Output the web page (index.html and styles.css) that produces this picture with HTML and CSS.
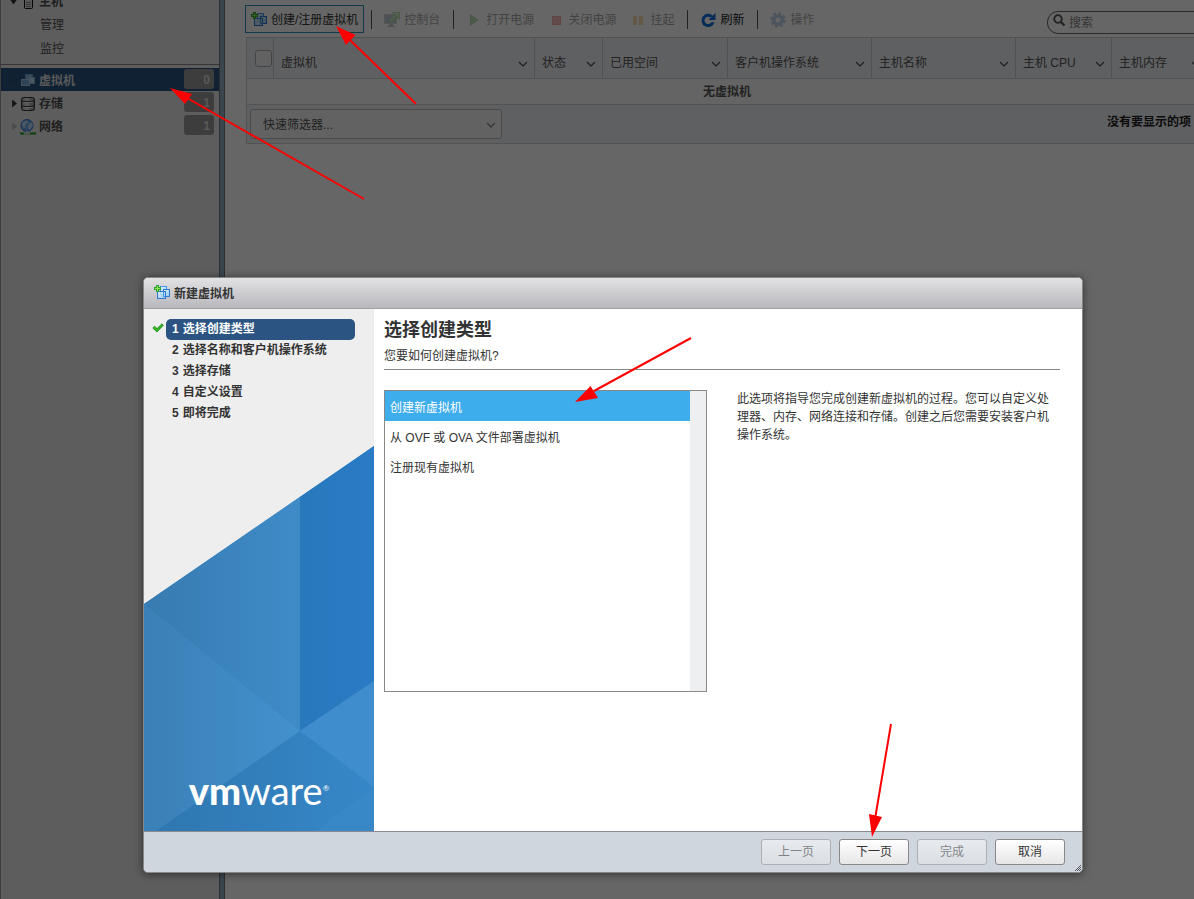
FILE: index.html
```html
<!DOCTYPE html>
<html lang="zh-CN">
<head>
<meta charset="utf-8">
<title>新建虚拟机</title>
<meta name="viewport" content="width=device-width, initial-scale=1">
<link rel="stylesheet" href="styles.css">
</head>
<body>
<svg class="defs" aria-hidden="true">
  <defs>
    <linearGradient id="sq" x1="0" y1="0" x2="1" y2="1"><stop offset="0" stop-color="#e4f4ff"/><stop offset="1" stop-color="#8cc8f5"/></linearGradient>
    <linearGradient id="cyl"><stop offset="0" stop-color="#888"/><stop offset=".4" stop-color="#e6e6e6"/><stop offset="1" stop-color="#777"/></linearGradient>
    <symbol id="i-newvm" viewBox="0 0 16 16">
      <rect x="6.500" y="1.500" width="6" height="8" fill="url(#sq)" stroke="#4a96e6"/>
      <rect x="9.500" y="4.500" width="6" height="7" fill="url(#sq)" stroke="#2f78d0"/>
      <rect x="3.500" y="6.500" width="8" height="7" fill="url(#sq)" fill-opacity=".8" stroke="#2f78d0"/>
      <path d="M9.500 6.500v5h2" fill="none" stroke="#4a96e6"/>
      <path d="M2 0h3v2h2v3H5v2H2V5H0V2h2z" fill="#2da32d"/>
      <path d="M3 1h1v2h2v1H4v2H3V4H1V3h2z" fill="#8bea5a"/>
    </symbol>
    <symbol id="i-vm" viewBox="0 0 16 16">
      <rect x="5.500" y="1.500" width="7" height="7" fill="#8fb8dc" stroke="#6a9ccc"/>
      <rect x="8.500" y="4.500" width="6" height="6" fill="#b8d6ee" stroke="#8ab4da"/>
      <rect x="1.500" y="6.500" width="8" height="6" fill="#7aaad6" stroke="#a8cbe8"/>
    </symbol>
    <symbol id="i-host" viewBox="0 0 16 16">
      <rect x="4.500" y="1" width="8" height="13.500" rx="1" fill="#ddd" stroke="#111"/>
      <path d="M6 10.500h5M6 12.500h5M6 8.500h5" stroke="#888"/>
    </symbol>
    <symbol id="i-store" viewBox="0 0 16 16">
      <rect x="1.500" y="1.500" width="13" height="13" rx="2" fill="url(#cyl)" stroke="#333"/>
      <path d="M2 5.500h12M2 10.500h12" stroke="#444"/>
      <path d="M3 6.500h10M3 11.500h10" stroke="#eee"/>
    </symbol>
    <symbol id="i-net" viewBox="0 0 16 16">
      <circle cx="7" cy="6.500" r="6" fill="#6aaaf0" stroke="#2b6cc8"/>
      <path d="M3 3l4-1.500 1 2-3 2 1 2-2 1.500-2-3zM9 5l3-2 .8 4-3 4-2-3z" fill="#c5ddf6"/>
      <path d="M0 14.500h16" stroke="#17a117" stroke-width="2"/>
      <path d="M4 14.500h6M6 13h2" stroke="#ddd" stroke-width="2"/>
    </symbol>
    <symbol id="i-console" viewBox="0 0 16 16">
      <rect x=".5" y="2.500" width="12" height="9" fill="#5b7fa8" stroke="#999"/>
      <path d="M5 12h4v2h2v1H3v-1h2z" fill="#777"/>
      <path d="M8 0h8v8l-3-2-5 5-3-3 5-5z" fill="#4caf3a"/>
      <path d="M7 8.500L13.500 2M10 1.500h4.500V6" fill="none" stroke="#c5efb5"/>
    </symbol>
    <symbol id="i-play" viewBox="0 0 16 16"><path d="M4.500 2.500v11l7-5.500z" fill="#5ab54e" stroke="#3f9a38"/></symbol>
    <symbol id="i-stop" viewBox="0 0 16 16"><rect x="4.500" y="4.500" width="8" height="8" fill="#ee5a5a" stroke="#d83030"/></symbol>
    <symbol id="i-pause" viewBox="0 0 16 16"><path d="M3 4h4v9H3zM9 4h4v9H9z" fill="#f0a63c"/></symbol>
    <symbol id="i-refresh" viewBox="0 0 16 16">
      <path d="M11.800 4.600A5.200 5.200 0 1 0 13.100 10.200" fill="none" stroke="#0a6fd8" stroke-width="3"/>
      <path d="M15.500 1v7H8.500z" fill="#0a6fd8"/>
    </symbol>
    <symbol id="i-gear" viewBox="0 0 16 16">
      <circle cx="8" cy="8" r="6.600" fill="none" stroke="#6b93c8" stroke-width="2.400" stroke-dasharray="2.900 2.283"/>
      <circle cx="8" cy="8" r="4.200" fill="none" stroke="#6b93c8" stroke-width="3.600"/>
    </symbol>
    <symbol id="i-chev" viewBox="0 0 10 6"><path d="M1 1l4 4 4-4" fill="none" stroke="currentColor" stroke-width="1.300"/></symbol>
    <symbol id="i-search" viewBox="0 0 12 12">
      <circle cx="5" cy="5" r="3.800" fill="none" stroke="#555" stroke-width="1.800"/>
      <path d="M7.500 7.500l4 4" stroke="#555" stroke-width="2.200"/>
    </symbol>
    <symbol id="i-check" viewBox="0 0 12 10"><path d="M.8 5L2.600 3.300 5 5.600 10 .8l1.400 1.500L5 9z" fill="#35b52a" stroke="#1b8a14" stroke-width=".8"/></symbol>
  </defs>
</svg>

<div class="app">
  <nav class="sidebar">
    <ul class="tree">
      <li><a class="node strong" href="#host"><span class="twist open"></span><svg class="ico"><use href="#i-host"/></svg>主机</a></li>
      <li><a class="node child" href="#manage">管理</a></li>
      <li><a class="node child" href="#monitor">监控</a></li>
    </ul>
    <ul class="tree inventory">
      <li><a class="node strong selected" href="#vms"><span class="twist dim"></span><svg class="ico"><use href="#i-vm"/></svg>虚拟机<span class="count">0</span></a></li>
      <li><a class="node strong" href="#storage"><span class="twist"></span><svg class="ico"><use href="#i-store"/></svg>存储<span class="count">1</span></a></li>
      <li><a class="node strong" href="#network"><span class="twist dim"></span><svg class="ico"><use href="#i-net"/></svg>网络<span class="count">1</span></a></li>
    </ul>
  </nav>
  <div class="splitter"></div>
  <main class="content">
    <div class="toolbar">
      <button class="tool focus"><svg class="ico"><use href="#i-newvm"/></svg>创建/注册虚拟机</button>
      <span class="sep"></span>
      <button class="tool" disabled><svg class="ico"><use href="#i-console"/></svg>控制台</button>
      <span class="sep"></span>
      <button class="tool" disabled><svg class="ico"><use href="#i-play"/></svg>打开电源</button>
      <button class="tool" disabled><svg class="ico"><use href="#i-stop"/></svg>关闭电源</button>
      <button class="tool" disabled><svg class="ico"><use href="#i-pause"/></svg>挂起</button>
      <span class="sep"></span>
      <button class="tool"><svg class="ico"><use href="#i-refresh"/></svg>刷新</button>
      <span class="sep"></span>
      <button class="tool" disabled><svg class="ico"><use href="#i-gear"/></svg>操作</button>
      <label class="search"><svg class="glass"><use href="#i-search"/></svg><input type="text" placeholder="搜索" aria-label="搜索"></label>
    </div>
    <table class="grid">
      <colgroup><col class="c-check"><col><col class="c-state"><col class="c-space"><col class="c-wide"><col class="c-wide"><col class="c-cpu"><col class="c-cpu"></colgroup>
      <thead>
        <tr>
          <th class="pick"><input type="checkbox" aria-label="全选"></th>
          <th><div class="head">虚拟机<svg class="chev"><use href="#i-chev"/></svg></div></th>
          <th><div class="head">状态<svg class="chev"><use href="#i-chev"/></svg></div></th>
          <th><div class="head">已用空间<svg class="chev"><use href="#i-chev"/></svg></div></th>
          <th><div class="head">客户机操作系统<svg class="chev"><use href="#i-chev"/></svg></div></th>
          <th><div class="head">主机名称<svg class="chev"><use href="#i-chev"/></svg></div></th>
          <th><div class="head">主机 CPU<svg class="chev"><use href="#i-chev"/></svg></div></th>
          <th><div class="head">主机内存<svg class="chev"><use href="#i-chev"/></svg></div></th>
        </tr>
      </thead>
      <tbody><tr><td class="empty" colspan="8">无虚拟机</td></tr></tbody>
      <tfoot>
        <tr><td colspan="8"><div class="gridfoot">
          <div class="filter"><select aria-label="快速筛选器"><option>快速筛选器...</option></select><svg class="chev"><use href="#i-chev"/></svg></div>
          <span class="total">没有要显示的项</span>
        </div></td></tr>
      </tfoot>
    </table>
  </main>
</div>

<div class="backdrop"></div>

<section class="dialog" role="dialog" aria-labelledby="dlg-title">
  <header class="titlebar"><svg class="ico"><use href="#i-newvm"/></svg><span id="dlg-title">新建虚拟机</span></header>
  <div class="wizard">
    <aside class="steps">
      <ol>
        <li><svg class="tick"><use href="#i-check"/></svg><span class="step current"><span>1</span>选择创建类型</span></li>
        <li><span class="step"><span>2</span>选择名称和客户机操作系统</span></li>
        <li><span class="step"><span>3</span>选择存储</span></li>
        <li><span class="step"><span>4</span>自定义设置</span></li>
        <li><span class="step"><span>5</span>即将完成</span></li>
      </ol>
      <div class="brand">
        <svg class="art" viewBox="0 0 230 385" preserveAspectRatio="none" aria-hidden="true">
          <defs>
            <linearGradient id="ga"><stop offset="0" stop-color="#377bb0"/><stop offset="1" stop-color="#3f8bc8"/></linearGradient>
            <linearGradient id="gb"><stop offset="0" stop-color="#3b80b6"/><stop offset="1" stop-color="#4391ce"/></linearGradient>
            <linearGradient id="gc"><stop offset="0" stop-color="#2f77b0"/><stop offset="1" stop-color="#3687c8"/></linearGradient>
            <linearGradient id="gd"><stop offset="0" stop-color="#2878bd"/><stop offset="1" stop-color="#2a7bc5"/></linearGradient>
          </defs>
          <path d="M0 158L230 0v385H0z" fill="#3985c2"/>
          <path d="M0 158L156 51v234z" fill="url(#ga)"/>
          <path d="M156 51L230 0v235l-74 50z" fill="url(#gd)"/>
          <path d="M0 158l156 127L12 385H0z" fill="url(#gb)"/>
          <path d="M156 285l74-50v106z" fill="#3f8dcc"/>
          <path d="M156 285l74 56-58 44H12z" fill="url(#gc)"/>
          <path d="M230 341v44h-58z" fill="#3888c7"/>
        </svg>
        <div class="logo"><b>vm</b>ware<sup>®</sup></div>
      </div>
    </aside>
    <div class="page">
      <h1>选择创建类型</h1>
      <p class="lead">您要如何创建虚拟机?</p>
      <div class="choice">
        <div class="options">
          <button class="option active">创建新虚拟机</button>
          <button class="option">从 OVF 或 OVA 文件部署虚拟机</button>
          <button class="option">注册现有虚拟机</button>
        </div>
        <p class="about">此选项将指导您完成创建新虚拟机的过程。您可以自定义处理器、内存、网络连接和存储。创建之后您需要安装客户机操作系统。</p>
      </div>
    </div>
  </div>
  <footer class="actions">
    <button class="btn" disabled>上一页</button>
    <button class="btn">下一页</button>
    <button class="btn" disabled>完成</button>
    <button class="btn">取消</button>
    <svg class="grip" viewBox="0 0 6 6"><path d="M0 6l6-6M2 6l4-4M4 6l2-2" stroke="#333" stroke-width=".8"/></svg>
  </footer>
</section>

<svg class="arrows" viewBox="0 0 1194 899" aria-hidden="true">
  <g stroke="#f00" stroke-width="2">
    <path d="M364 199L188 98.500M416 104L350 40M691 338L594 391M891 724L875.500 816"/>
  </g>
  <g fill="#f00">
    <path d="M170 88l22 6-7 10zM336 26l19.500 9-9.500 10zM575 402l15.500-16 7.500 12zM872 837l-3-23 13 3z"/>
  </g>
</svg>
</body>
</html>
```
FILE: styles.css
```css
* { box-sizing: border-box; }
html, body { height: 100%; }
body {
  margin: 0;
  overflow: hidden;
  position: relative;
  background: #fff;
  color: #333;
  font: 12px/18px "Liberation Sans", "Noto Sans CJK SC", sans-serif;
}
button, input, select { font: inherit; color: inherit; margin: 0; }
ul, ol { list-style: none; margin: 0; padding: 0; }
.defs { position: absolute; width: 0; height: 0; }
.ico { width: 16px; height: 16px; flex: none; }
.chev { width: 10px; height: 6px; flex: none; }

.app { display: flex; height: 100%; color: #555; }
.sidebar {
  width: 219px;
  flex: none;
  background: #e8e9eb;
  border-left: 1px solid #999;
}
.splitter {
  width: 6px;
  flex: none;
  background: #92b0c4;
  border: solid #777;
  border-width: 0 1px;
}
.content { flex: 1; min-width: 0; padding: 5px 0 0 20px; overflow: hidden; }

.tree:first-child { margin-top: -11px; padding-bottom: 3px; border-bottom: 1px solid #888; }
.node {
  display: flex;
  align-items: center;
  gap: 3px;
  height: 23px;
  padding: 2px 5px 0 9px;
  color: #505050;
  text-decoration: none;
}
.tree:first-child .node { height: 24px; }
.strong { font-weight: bold; }
.tree:first-child .child { padding: 0 0 0 39px; }
.inventory { padding-top: 3px; }
.selected { background: #2b5482; color: #ddd; }
.twist {
  width: 7px;
  height: 8px;
  background: #333;
  clip-path: polygon(30% 0, 100% 50%, 30% 100%);
}
.twist.open { clip-path: polygon(0 20%, 100% 20%, 50% 80%); }
.twist.dim { opacity: .25; }
.count {
  align-self: flex-start;
  margin: -1px 0 0 auto;
  width: 30px;
  height: 20px;
  padding-right: 4px;
  border-radius: 3px;
  background: #9a9a9a;
  color: #ddd;
  line-height: 22px;
  text-align: right;
}

.toolbar { display: flex; align-items: center; height: 28px; }
.tool {
  display: flex;
  align-items: center;
  gap: 4px;
  height: 28px;
  flex: none;
  padding: 1px 5px 0;
  border: 1px solid transparent;
  background: none;
  color: #222;
  white-space: nowrap;
}
.tool + .tool { margin-left: 2px; }
.tool:disabled { opacity: .4; }
.tool.focus { border-color: #2f93b8; color: #333; }
.sep { width: 1px; height: 19px; margin: 0 6px 0 7px; background: #555; flex: none; }
.search {
  display: flex;
  align-items: center;
  gap: 4px;
  flex: none;
  width: 161px;
  height: 23px;
  margin: 6px -14px 0 auto;
  padding-left: 5px;
  border: 1px solid #666;
  border-radius: 11px;
}
.glass { width: 12px; height: 12px; flex: none; margin-bottom: 4px; }
.search input { flex: 1; min-width: 0; border: 0; padding: 1px 0 0; background: none; outline: 0; }
.search input::placeholder { color: #888; opacity: 1; }

.grid {
  width: calc(100% + 13px);
  margin: 4px 0 0 1px;
  table-layout: fixed;
  border-collapse: collapse;
  border: 1px solid #ccc;
}
.c-check { width: 27px; }
.c-state { width: 68px; }
.c-space { width: 125px; }
.c-wide { width: 144px; }
.c-cpu { width: 96px; }
.grid th {
  height: 41px;
  padding: 10px 6px 0 7px;
  border: 1px solid #ccc;
  background: #edf0f4;
  font-weight: normal;
  text-align: left;
}
.head { display: flex; align-items: center; justify-content: space-between; white-space: nowrap; }
.head .chev { margin-top: 2px; }
.grid th.pick { padding: 0 0 0 8px; }
.pick input {
  display: block;
  appearance: none;
  width: 17px;
  height: 17px;
  border: 1px solid #aaa;
  border-radius: 3px;
  background: #f5f5f5;
}
.grid td { padding: 0; }
.grid .empty { height: 25px; padding-top: 1px; background: #fafafa; text-align: center; font-weight: bold; }
.gridfoot {
  display: flex;
  align-items: center;
  justify-content: space-between;
  height: 39px;
  padding: 0 16px 0 3px;
  border-top: 1px solid #ccc;
  background: #edf0f4;
}
.filter { position: relative; width: 252px; height: 30px; }
.filter select {
  appearance: none;
  width: 100%;
  height: 100%;
  padding: 2px 12px 0;
  border: 1px solid #bbb;
  border-radius: 3px;
  background: #f4f4f4;
}
.filter .chev { position: absolute; right: 6px; top: 13px; color: #888; }
.total { padding-bottom: 4px; font-weight: bold; color: #222; }

.backdrop { position: absolute; inset: 0; background: rgba(0, 0, 0, .6); }

.dialog {
  position: absolute;
  inset: 277px 111px 26px 143px;
  display: flex;
  flex-direction: column;
  border: 1px solid #868686;
  border-radius: 5px;
  background: #fff;
  box-shadow: 0 1px 8px rgba(0, 0, 0, .5);
  overflow: hidden;
}
.titlebar {
  display: flex;
  align-items: center;
  gap: 4px;
  height: 31px;
  flex: none;
  padding: 0 10px;
  border-bottom: 1px solid #a0a0a4;
  background: linear-gradient(#e2e2e5, #b8b8bc);
  font-weight: bold;
}
.titlebar span { padding-top: 2px; }
.wizard { flex: 1; min-height: 0; display: flex; }
.steps {
  display: flex;
  flex-direction: column;
  justify-content: space-between;
  width: 230px;
  flex: none;
  padding-top: 10px;
  background: #eee;
  font-weight: bold;
}
.steps li { display: flex; align-items: center; justify-content: flex-end; height: 21px; padding-right: 19px; }
.tick { width: 12px; height: 10px; margin: 0 2px 4px 0; }
.step {
  display: flex;
  gap: 4px;
  width: 189px;
  height: 21px;
  padding-left: 6px;
  border-radius: 5px;
  line-height: 21px;
  white-space: nowrap;
}
.step.current { background: #2b5482; color: #fff; }
.brand { display: grid; height: 385px; }
.art, .logo { grid-area: 1 / 1; }
.art { width: 100%; height: 100%; }
.logo {
  align-self: end;
  justify-self: center;
  padding-bottom: 19px;
  z-index: 1;
  color: #fff;
  font: 400 38px/44px Lato, sans-serif;
}
.logo b { font-weight: 900; }
.logo sup { font-size: 8px; line-height: 8px; vertical-align: 14px; }

.page { flex: 1; min-width: 0; padding: 9px 22px 0 10px; }
.page h1 { margin: 0; font-size: 18px; line-height: 24px; }
.lead { margin: 0 0 20px; padding: 5px 0 4px; border-bottom: 1px solid #888; line-height: 18px; }
.choice { display: flex; gap: 30px; align-items: flex-start; }
.options {
  width: 323px;
  height: 302px;
  flex: none;
  padding-right: 16px;
  border: 1px solid #888;
  background: linear-gradient(#eeeff0, #eeeff0) right / 16px 100% no-repeat;
}
.option {
  display: block;
  width: 100%;
  height: 30px;
  padding: 4px 5px 0;
  border: 0;
  background: #fff;
  text-align: left;
}
.option.active { background: #3eadec; color: #fff; }
.about { flex: 1; max-width: 314px; margin: 0; }

.actions {
  position: relative;
  display: flex;
  justify-content: flex-end;
  gap: 8px;
  height: 41px;
  flex: none;
  padding: 7px 17px 0;
  border-top: 1px solid #888c92;
  background: #d0d6de;
}
.btn {
  width: 70px;
  height: 26px;
  padding: 0;
  border: 1px solid #888;
  border-radius: 3px;
  background: linear-gradient(#fff, #e6e6e6);
}
.btn:disabled { opacity: .5; }
.grip { position: absolute; right: 1px; bottom: 1px; width: 6px; height: 6px; }

.arrows { position: absolute; left: 0; top: 0; width: 1194px; height: 899px; pointer-events: none; }
```
